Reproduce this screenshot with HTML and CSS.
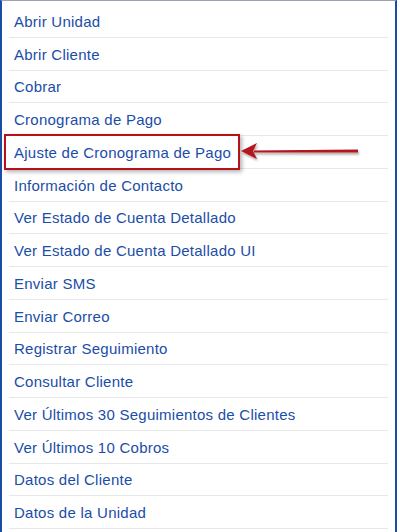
FILE: index.html
```
<!DOCTYPE html>
<html lang="es">
<head>
    <meta charset="UTF-8">
    <title>Acciones</title>
    <link rel="stylesheet" href="styles.css">
</head>
<body>
    <div class="frame">
        <ul class="menu">
            <li class="menu-item"><a href="#">Abrir Unidad</a></li>
            <li class="menu-item"><a href="#">Abrir Cliente</a></li>
            <li class="menu-item"><a href="#">Cobrar</a></li>
            <li class="menu-item"><a href="#">Cronograma de Pago</a></li>
            <li class="menu-item marked">
                <a href="#">Ajuste de Cronograma de Pago</a>
                <span class="mark-box"></span>
                <svg class="mark-arrow" width="124" height="24" viewBox="0 0 124 24">
                    <defs>
                        <filter id="sh" x="-10%" y="-50%" width="120%" height="200%">
                            <feDropShadow dx="1" dy="2" stdDeviation="1.2" flood-color="#000" flood-opacity="0.35"/>
                        </filter>
                    </defs>
                    <g filter="url(#sh)">
                        <path d="M14 10.5 L118 9.5 L118 12.5 L14 12.5 Z" fill="#b3121b"/>
                        <path d="M1 11 L17 3 L13 11 L17 19 Z" fill="#b3121b"/>
                    </g>
                </svg>
            </li>
            <li class="menu-item"><a href="#">Información de Contacto</a></li>
            <li class="menu-item"><a href="#">Ver Estado de Cuenta Detallado</a></li>
            <li class="menu-item"><a href="#">Ver Estado de Cuenta Detallado UI</a></li>
            <li class="menu-item"><a href="#">Enviar SMS</a></li>
            <li class="menu-item"><a href="#">Enviar Correo</a></li>
            <li class="menu-item"><a href="#">Registrar Seguimiento</a></li>
            <li class="menu-item"><a href="#">Consultar Cliente</a></li>
            <li class="menu-item"><a href="#">Ver Últimos 30 Seguimientos de Clientes</a></li>
            <li class="menu-item"><a href="#">Ver Últimos 10 Cobros</a></li>
            <li class="menu-item"><a href="#">Datos del Cliente</a></li>
            <li class="menu-item"><a href="#">Datos de la Unidad</a></li>
        </ul>
    </div>
</body>
</html>
```

FILE: styles.css
```
body {
    margin: 0;
    padding: 0;
    background-color: #ffffff;
    font-family: "Liberation Sans", Arial, sans-serif;
}
.frame {
    height: 532px;
    box-sizing: border-box;
    border-top: 1px solid #98a3b6;
    border-left: 2px solid #1b4ea3;
    border-right: 2px solid #1b4ea3;
    overflow: hidden;
}
.menu {
    list-style: none;
    margin: 0;
    padding: 4px 7px 0 7px;
}
.menu-item {
    height: 32.75px;
    box-sizing: border-box;
    border-bottom: 1px solid #e8e8e8;
    display: flex;
    align-items: center;
}
.menu-item a {
    color: #1a4da8;
    text-decoration: none;
    font-size: 15px;
    letter-spacing: 0.25px;
    padding-left: 5px;
    padding-top: 1px;
}
.marked {
    position: relative;
}
.mark-box {
    position: absolute;
    left: -5px;
    top: -2px;
    width: 236px;
    height: 36px;
    box-sizing: border-box;
    border: 2px solid #b3121b;
    box-shadow: 2px 2px 4px rgba(0, 0, 0, 0.3);
}
.mark-arrow {
    position: absolute;
    left: 231px;
    top: 4px;
}
```
